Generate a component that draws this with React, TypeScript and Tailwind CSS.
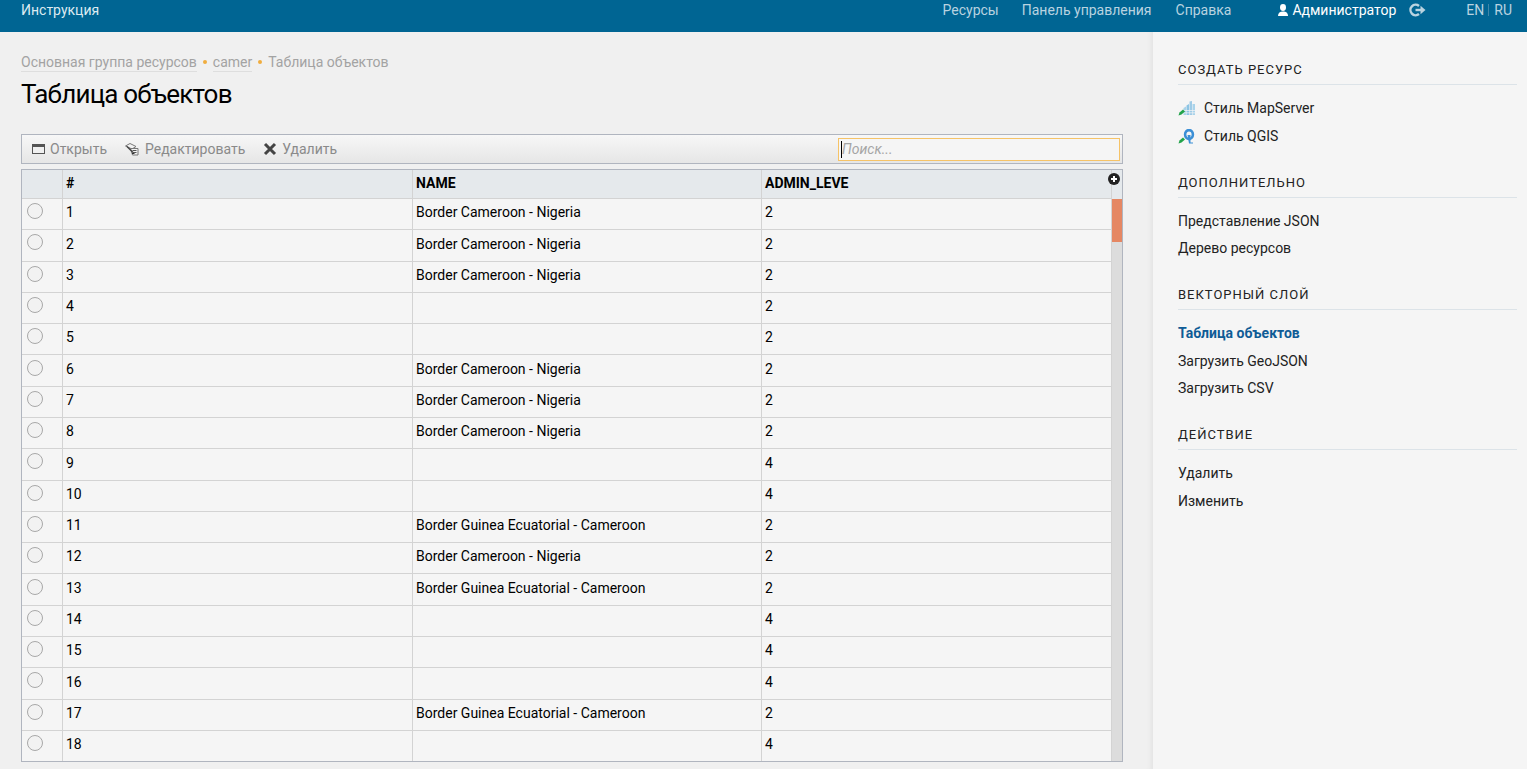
const NG = "Border Cameroon - Nigeria";
const GE = "Border Guinea Ecuatorial - Cameroon";

const rows: [number, string, number][] = [
  [1, NG, 2], [2, NG, 2], [3, NG, 2], [4, "", 2], [5, "", 2], [6, NG, 2],
  [7, NG, 2], [8, NG, 2], [9, "", 4], [10, "", 4], [11, GE, 2], [12, NG, 2],
  [13, GE, 2], [14, "", 4], [15, "", 4], [16, "", 4], [17, GE, 2], [18, "", 4],
];

const cellClass = "flex items-center border-r border-[#d3d3d3] pb-[2.7px] pl-[3px]";
const headClass = "flex items-center border-r border-[#d3d3d3] pb-[1px] pl-[3px]";

function WindowIcon() {
  return (
    <svg width="14" height="12" viewBox="0 0 14 12" className="shrink-0">
      <rect x="0.5" y="1.5" width="12" height="9" fill="#f0f0f0" stroke="#555" />
      <rect x="0.5" y="1.5" width="12" height="2.5" fill="#555" />
    </svg>
  );
}

function EditIcon() {
  return (
    <svg width="15" height="13" viewBox="0 0 15 13" className="shrink-0">
      <path d="M0.5 3 5 0.500 11 3.500 7 6z" fill="#f2f2f2" stroke="#777" />
      <path d="M5.500 5.500h7.500v6.500H7.500z" fill="#f2f2f2" stroke="#777" />
      <path d="M7.500 7.500h4M8 9.500h3.500" stroke="#555" />
      <path d="M2 3.500l6 6" stroke="#444" strokeWidth="1.400" />
      <path d="M7 10.500h2.500" stroke="#333" />
    </svg>
  );
}

function CrossIcon() {
  return (
    <svg width="14" height="14" viewBox="0 0 14 14" className="shrink-0">
      <path d="M2 2l10 10M12 2 2 12" stroke="#444" strokeWidth="3" />
    </svg>
  );
}

function PlusBadge() {
  return (
    <svg width="12" height="12" viewBox="0 0 12 12">
      <circle cx="6" cy="6" r="6" fill="#222" />
      <path d="M6 3v6M3 6h6" stroke="#fff" strokeWidth="2" />
    </svg>
  );
}

function UserIcon() {
  return (
    <svg width="10" height="12" viewBox="0 0 10 12" className="shrink-0">
      <ellipse cx="5" cy="3.500" rx="3" ry="3.400" fill="#fff" />
      <path d="M0 12c0-3.200 2-4.500 5-4.500s5 1.300 5 4.500z" fill="#fff" />
    </svg>
  );
}

function ExitIcon() {
  return (
    <svg width="17" height="14" viewBox="0 0 17 14" className="shrink-0">
      <path d="M10 3A5.200 5.200 0 1 0 10 11" fill="none" stroke="#b9d3e0" strokeWidth="2.400" />
      <path d="M6.500 7h6" stroke="#b9d3e0" strokeWidth="2.400" />
      <path d="M11.500 2.800 16.500 7 11.500 11.200z" fill="#b9d3e0" />
    </svg>
  );
}

function Pencil() {
  return <path d="M0.500 14.500 1.500 11.500 5 8.500 7 10.500 3.500 13.500z" fill="#22a34a" />;
}

function MapServerIcon() {
  return (
    <svg width="17" height="15" viewBox="0 0 17 15" className="shrink-0">
      <path d="M5.500 7 8 5.500V14H5.500z" fill="#a9d3ea" />
      <path d="M8.500 4.500 11 3V14H8.500z" fill="#8cc4e4" />
      <path d="M11.500 0.500 14 0V14h-2.500z" fill="#9fcbe6" />
      <path d="M14.500 3H17v11h-2.500z" fill="#a9d3ea" />
      <path d="M5 9.500h12M5 11.800h12" stroke="#f5f5f5" strokeWidth="0.700" />
      <Pencil />
    </svg>
  );
}

function QgisIcon() {
  return (
    <svg width="17" height="15" viewBox="0 0 17 15" className="shrink-0">
      <ellipse cx="11" cy="5.500" rx="3.900" ry="4.400" fill="none" stroke="#3b8fd6" strokeWidth="2.600" />
      <path d="M9.500 6h3v7.500H15v1h-4z" fill="#3b8fd6" />
      <Pencil />
    </svg>
  );
}

function SideHeading({ children }: { children: string }) {
  return (
    <h3 className="border-b border-[#dce3e8] pb-[7px] text-[13px] leading-[15px] tracking-[1px] text-[#222]">
      {children}
    </h3>
  );
}

function SideLink({ children, active }: { children: React.ReactNode; active?: boolean }) {
  return (
    <a className={active ? "flex h-[27.5px] items-center gap-[9px] font-bold text-[#0f5c96]" : "flex h-[27.5px] items-center gap-[9px] text-[#222]"}>
      {children}
    </a>
  );
}

export default function App() {
  return (
    <div className="flex h-[769px] flex-col overflow-hidden bg-[#f0f0f0] font-['Roboto',sans-serif] text-[14px] text-black">
      <header className="flex h-8 shrink-0 items-start justify-between bg-[#006593] pl-[21px] pr-[15px] pt-[1px] leading-[18px] text-[#b9d3e0]">
        <a className="text-[#dceaf1]">Инструкция</a>
        <nav className="flex items-center">
          <a className="mr-[23px]">Ресурсы</a>
          <a className="mr-6">Панель управления</a>
          <a className="mr-[47px]">Справка</a>
          <UserIcon />
          <span className="ml-[4px] mr-[13px] text-white">Администратор</span>
          <ExitIcon />
          <a className="ml-[40px]">EN</a>
          <span className="mx-1 h-3 w-px bg-[#3f86a8]" />
          <a className="ml-[1px]">RU</a>
        </nav>
      </header>

      <div className="flex min-h-0 flex-1">
        <main className="w-[1153px] shrink-0 pl-[21px] pr-[30px] pt-[21px] shadow-[inset_-6px_0_6px_-6px_#d8d8d8]">
          <div className="flex h-[18px] items-center leading-[18px] text-[#a3a3a3]">
            <a className="border-b border-[#dedede]">Основная группа ресурсов</a>
            <span className="mx-[6px] h-1 w-1 rounded-full bg-[#f0ad3e]" />
            <a className="border-b border-[#dedede]">camer</a>
            <span className="mx-[6px] h-1 w-1 rounded-full bg-[#f0ad3e]" />
            <span>Таблица объектов</span>
          </div>
          <h1 className="mt-[6px] text-[26px] leading-[34px] tracking-[-0.8px]">Таблица объектов</h1>

          <div className="mt-[23px] flex h-[30px] items-center border border-[#b0b5bf] bg-gradient-to-b from-[#f7f7f7] to-[#e6e6e6] pl-[10px] pr-[2px] text-[#8a8a8a]">
            <button className="flex items-center gap-[4px]"><WindowIcon />Открыть</button>
            <button className="ml-[18px] flex items-center gap-[5px]"><EditIcon />Редактировать</button>
            <button className="ml-[18px] flex items-center gap-[5px]"><CrossIcon />Удалить</button>
            <div className="relative ml-auto">
              <input
                placeholder="Поиск..."
                className="block h-[23px] w-[282px] border border-[#f6c367] bg-[#f5f5f5] pl-[3px] text-[14px] italic text-black outline-none placeholder:text-[#a5a5a5]"
              />
              <span className="absolute left-[3px] top-[3px] h-[17px] w-px bg-black" />
            </div>
          </div>

          <div className="relative mt-[5px] flex h-[593px] overflow-hidden border border-[#b0b5bf] bg-[#f5f5f5]">
            <div className="flex min-w-0 flex-1 flex-col">
              <div className="grid h-[29px] shrink-0 grid-cols-[41px_350px_349px_1fr] border-b border-[#d3d3d3] bg-[#e5e9ec] font-bold">
                <div className="border-r border-[#d3d3d3]" />
                <div className={headClass}>#</div>
                <div className={headClass}>NAME</div>
                <div className="flex items-center pb-[1px] pl-[3px]">ADMIN_LEVE</div>
              </div>
              {rows.map(([id, name, level]) => (
                <div key={id} className="grid h-[31.29px] shrink-0 grid-cols-[41px_350px_349px_1fr] border-b border-[#d3d3d3]">
                  <div className="flex items-center border-r border-[#d3d3d3] pb-[6px] pl-[5px]">
                    <span className="h-4 w-4 rounded-full border border-[#a8a8a8] bg-[#f2f2f2]" />
                  </div>
                  <div className={cellClass}>{id}</div>
                  <div className={cellClass}>{name}</div>
                  <div className="flex items-center pb-[2.7px] pl-[3px]">{level}</div>
                </div>
              ))}
            </div>
            <div className="flex w-[11px] shrink-0 flex-col border-l border-[#d3d3d3] bg-[#dcdcdc]">
              <div className="h-[29px] shrink-0 bg-[#e5e9ec]" />
              <div className="h-[43px] shrink-0 bg-[#e58763]" />
            </div>
            <button className="absolute right-[2px] top-[3px] flex"><PlusBadge /></button>
          </div>
        </main>

        <aside className="flex-1 bg-[#f5f5f5] pl-[25px] pr-[10px] pt-[30px]">
          <SideHeading>СОЗДАТЬ РЕСУРС</SideHeading>
          <div className="mt-[10px]">
            <SideLink><MapServerIcon />Стиль MapServer</SideLink>
            <SideLink><QgisIcon />Стиль QGIS</SideLink>
          </div>
          <div className="mt-[24.6px]"><SideHeading>ДОПОЛНИТЕЛЬНО</SideHeading></div>
          <div className="mt-[10px]">
            <SideLink>Представление JSON</SideLink>
            <SideLink>Дерево ресурсов</SideLink>
          </div>
          <div className="mt-[24.4px]"><SideHeading>ВЕКТОРНЫЙ СЛОЙ</SideHeading></div>
          <div className="mt-[10px]">
            <SideLink active>Таблица объектов</SideLink>
            <SideLink>Загрузить GeoJSON</SideLink>
            <SideLink>Загрузить CSV</SideLink>
          </div>
          <div className="mt-[24.3px]"><SideHeading>ДЕЙСТВИЕ</SideHeading></div>
          <div className="mt-[10px]">
            <SideLink>Удалить</SideLink>
            <SideLink>Изменить</SideLink>
          </div>
        </aside>
      </div>
    </div>
  );
}
